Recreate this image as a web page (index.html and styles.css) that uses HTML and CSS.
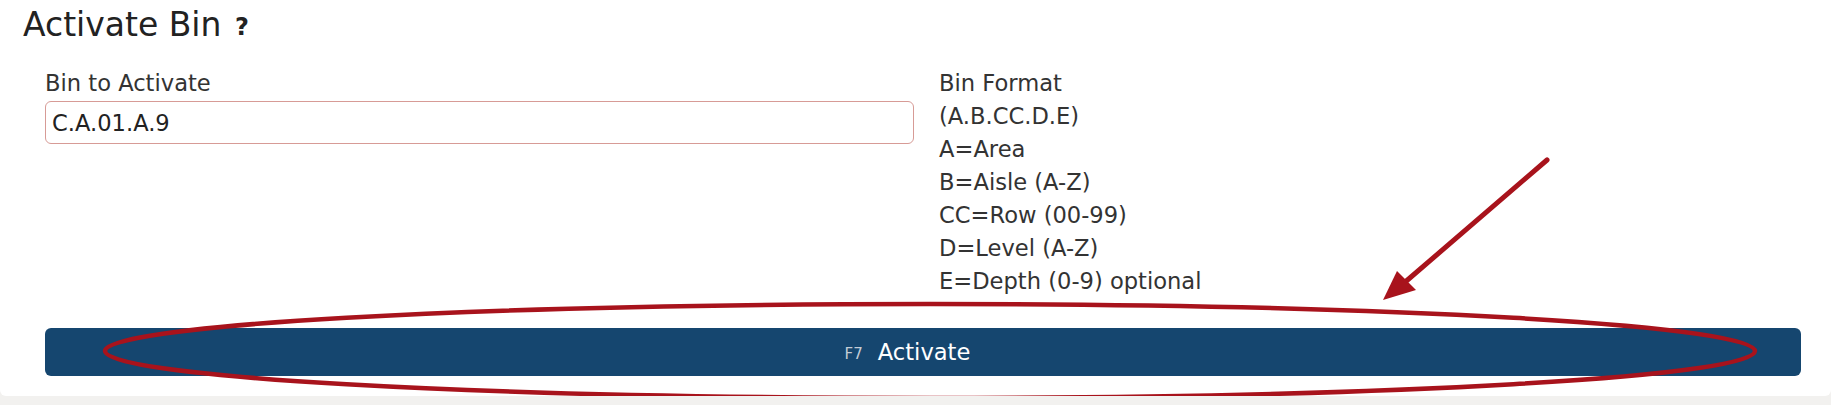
FILE: index.html
```html
<!DOCTYPE html>
<html lang="en">
<head>
  <meta charset="UTF-8" />
  <meta name="viewport" content="width=device-width, initial-scale=1.0"/>
  <title>Activate Bin</title>
  <link rel="stylesheet" href="styles.css">
</head>
<body>

<div class="panel">
  <h1 class="page-title">Activate Bin <span class="help-icon">?</span></h1>

  <div class="form-body">
    <div class="form-row">
      <div class="field">
        <label class="field-label" for="binInput">Bin to Activate</label>
        <input type="text" id="binInput" class="bin-input" value="C.A.01.A.9">
      </div>
      <div class="format-help">
        <div>Bin Format</div>
        <div>(A.B.CC.D.E)</div>
        <div>A=Area</div>
        <div>B=Aisle (A-Z)</div>
        <div>CC=Row (00-99)</div>
        <div>D=Level (A-Z)</div>
        <div>E=Depth (0-9) optional</div>
      </div>
    </div>

    <button class="btn-activate"><span class="hotkey">F7</span>Activate</button>
  </div>
</div>

<!-- screenshot markup: circle + arrow -->
<svg class="annotation" width="1831" height="405" viewBox="0 0 1831 405">
  <ellipse cx="930" cy="351" rx="825" ry="47" fill="none" stroke="#a8131c" stroke-width="4.5"/>
  <line x1="1547" y1="160" x2="1404" y2="283" stroke="#a8131c" stroke-width="5" stroke-linecap="round"/>
  <polygon points="1383,300 1397,271 1416,290" fill="#a8131c"/>
</svg>

</body>
</html>
```

FILE: styles.css
```css
body { margin: 0; background: #f2f1ef; font-family: "DejaVu Sans", Verdana, sans-serif; color: #333; position: relative; }

.panel {
  background: #fff;
  height: 396px;
  border-radius: 0 0 6px 6px;
  overflow: hidden;
}

.page-title {
  margin: 5px 0 0 23px;
  font-size: 33px;
  line-height: 40px;
  font-weight: normal;
  color: #222;
}

.help-icon {
  font-size: 24px;
  font-weight: 900;
  margin-left: 3px;
  vertical-align: 1px;
}

.form-body { padding: 20px 30px 0 45px; }

.form-row {
  display: grid;
  grid-template-columns: 869px 1fr;
  column-gap: 25px;
  font-size: 22.6px;
  line-height: 33px;
}

.field-label { display: block; margin-bottom: 1px; }

.bin-input {
  box-sizing: border-box;
  width: 100%;
  height: 43px;
  padding: 0 6px;
  font: inherit;
  color: #222;
  border: 1.5px solid #d79b96;
  border-radius: 6px;
  outline: none;
}

.btn-activate {
  display: flex;
  justify-content: center;
  align-items: center;
  width: 1756px;
  height: 48px;
  margin-top: 30px;
  padding: 0 31px 0 0;
  background: #15466f;
  color: #fff;
  border: none;
  border-radius: 6px;
  font-family: inherit;
  font-size: 22.6px;
  cursor: pointer;
}

.hotkey {
  font-size: 15px;
  color: #c3ccd6;
  margin-right: 15px;
  padding-top: 3px;
}

.annotation { position: absolute; top: 0; left: 0; pointer-events: none; }
```
